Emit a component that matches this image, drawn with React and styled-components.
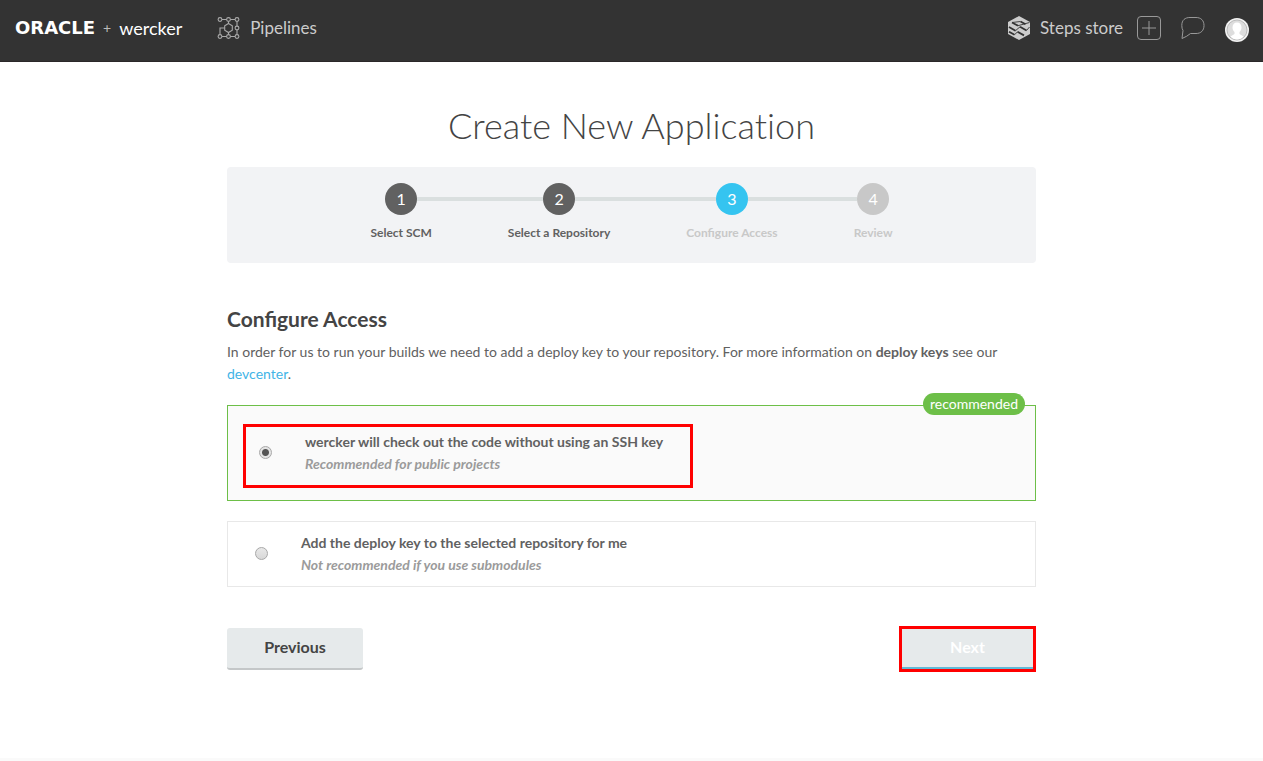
import React, { useState } from "react";
import styled, { createGlobalStyle } from "styled-components";

const GlobalStyle = createGlobalStyle`
  *, *::before, *::after { box-sizing: border-box; }
  body {
    margin: 0;
    background: #fff;
    color: #616161;
    font-family: Lato, "Liberation Sans", sans-serif;
    font-size: 14px;
    line-height: 22px;
  }
`;

const Page = styled.div`
  display: flex;
  flex-direction: column;
  min-height: 100vh;
`;

const Header = styled.header`
  display: flex;
  justify-content: space-between;
  align-items: center;
  height: 62px;
  padding: 0 14px 6px 15px;
  background: #333;
  border-bottom: 1px solid #2b2829;
`;

const NavGroup = styled.nav`
  display: flex;
  align-items: center;
  gap: ${(p) => p.$gap}px;
`;

const Brand = styled.a`
  display: flex;
  align-items: center;
  gap: 8px;
  color: #fff;
  font-size: 18px;
  text-decoration: none;
`;

const OracleName = styled.span`
  font: bold 18px/22px "DejaVu Sans", sans-serif;
`;

const Plus = styled.span`
  color: #bbb;
  font-size: 14px;
`;

const NavLink = styled.a`
  display: flex;
  align-items: center;
  gap: 10px;
  color: #ccc;
  font-size: 17px;
  text-decoration: none;
`;

const IconButton = styled.button`
  display: flex;
  padding: 0;
  border: 0;
  background: none;
  cursor: pointer;
`;

const Main = styled.main`
  flex: 1;
  width: 100%;
  max-width: 809px;
  margin: 0 auto;
  padding: 40px 0;
`;

const Title = styled.h1`
  margin: 0 0 19px;
  color: #444;
  font-size: 36px;
  font-weight: 300;
  font-variant-ligatures: none;
  line-height: 46px;
  text-align: center;
`;

const Steps = styled.ol`
  display: flex;
  justify-content: center;
  height: 96px;
  margin: 0 0 42px;
  padding: 16px 0 0;
  border-radius: 4px;
  background: #f2f3f5;
  list-style: none;
`;

const StepItem = styled.li`
  display: flex;
  flex-direction: column;
  gap: 7px;
`;

const StepTrack = styled.div`
  display: flex;
  align-items: center;
  &::before,
  &::after {
    content: "";
    flex: 1;
    height: 4px;
    background: #dadfdf;
  }
  ${StepItem}:first-child &::before,
  ${StepItem}:last-child &::after {
    background: none;
  }
`;

const circleColors = { done: "#616161", current: "#35c4f0", todo: "#c8c8c8" };

const StepNumber = styled.span`
  width: 32px;
  height: 32px;
  border-radius: 50%;
  background: ${(p) => circleColors[p.$state]};
  color: #fff;
  font-size: 16px;
  line-height: 32px;
  text-align: center;
`;

const StepLabel = styled.span`
  padding: 0 38px;
  color: ${(p) => (p.$state === "done" ? "#616161" : "#c8c8c8")};
  font-size: 12px;
  font-weight: 700;
  white-space: nowrap;
`;

const SectionTitle = styled.h2`
  margin: 0 0 8px;
  color: #444;
  font-size: 21px;
  font-weight: 700;
  line-height: 28px;
`;

const Intro = styled.p`
  margin: 0 0 20px;
  font-variant-ligatures: none;
`;

const TextLink = styled.a`
  color: #42b4e6;
  text-decoration: none;
`;

const Card = styled.div`
  position: relative;
  margin-bottom: 20px;
  padding: ${(p) => (p.$recommended ? "18px 15px 12px" : "10px 27px")};
  border: 1px solid ${(p) => (p.$recommended ? "#6dbf48" : "#e8e8e8")};
  background: ${(p) => (p.$recommended ? "#fafafa" : "#fff")};
`;

const Badge = styled.span`
  position: absolute;
  top: -13px;
  right: 10px;
  padding: 0 7px;
  border-radius: 11px;
  background: #6dbf48;
  color: #fff;
`;

const RedFrame = styled.div`
  width: fit-content;
  border: 3px solid #f00;
`;

const Option = styled.label`
  display: flex;
  align-items: center;
  gap: 33px;
  padding: ${(p) => (p.$framed ? "4px 27px 10px 13px" : "0")};
  cursor: pointer;
`;

const Radio = styled.input`
  appearance: none;
  width: 13px;
  height: 13px;
  margin: 0 0 2px;
  border: 1px solid #a8a8a8;
  border-radius: 50%;
  background: linear-gradient(#e8e8e8, #d8d8d8);
  &:checked {
    background: radial-gradient(circle, #555 0 3px, #e4e4e4 4px);
  }
`;

const OptionText = styled.span`
  display: flex;
  flex-direction: column;
  font-weight: 700;
`;

const Hint = styled.em`
  color: #9b9b9b;
`;

const Actions = styled.div`
  display: flex;
  justify-content: space-between;
  align-items: center;
  margin-top: 39px;
`;

const Button = styled.button`
  width: ${(p) => (p.$next ? 131 : 136)}px;
  height: ${(p) => (p.$next ? 40 : 42)}px;
  display: block;
  padding: 0 0 2px;
  border: 0;
  border-bottom: 2px solid ${(p) => (p.$next ? "#62b9d6" : "#c4c7c8")};
  border-radius: ${(p) => (p.$next ? 0 : 3)}px;
  background: #e6eaeb;
  color: ${(p) => (p.$next ? "#fff" : "#444")};
  font: 700 16px/22px Lato, sans-serif;
  cursor: pointer;
`;

const Footer = styled.footer`
  height: 3px;
  background: #fafafa;
`;

function PipelinesIcon() {
  const dots = [[2.5, 2.5], [11, 2.5], [19.5, 2.5], [19.5, 11], [2.5, 19.5], [11, 19.5], [19.5, 19.5]];
  return (
    <svg width="23" height="22" viewBox="0 0 22 22" fill="none" stroke="#aaa" strokeWidth="1.1">
      {dots.map(([x, y]) => (
        <circle key={x + "-" + y} cx={x} cy={y} r="1.9" />
      ))}
      <path d="M4.5 2.5H9M13 2.5h4.500M19.500 4.500V9M19.500 13v4.500M4.500 19.500H9M13 19.500h4.500M2.500 17.500V11H7M11 4.500v2M11 15.500v2" />
      <path d="M11 6.500 14.800 8.700v4.600L11 15.500l-3.800-2.200V8.700z" />
    </svg>
  );
}

function StepsIcon() {
  return (
    <svg width="22" height="24" viewBox="0 0 22 24">
      <path fill="#ccc" d="M11 0 22 6v12l-11 6L0 18V6z" />
      <g stroke="#333" fill="none">
        <path strokeWidth="1.800" d="M4 6.500l6 3.200M1 11l6.500 3.700M1 15.800l5.500 3M12.500 5.500l5 2.700M12 10.800l6.500 3.700M9.500 15.800l6.500 3.600" />
        <path strokeWidth="0.900" d="M10 9.700 21.500 6.500M7.500 14.700 12 10.800M18.500 14.500l3-3.500M6.500 18.800l3-3M4 6.500l8.500-1" />
      </g>
    </svg>
  );
}

function PlusIcon() {
  return (
    <svg width="24" height="24" viewBox="0 0 24 24" fill="none" stroke="#999">
      <rect x="0.500" y="0.500" width="23" height="23" rx="3.500" />
      <path d="M12 5v14M5 12h14" />
    </svg>
  );
}

function ChatIcon() {
  return (
    <svg width="24" height="24" viewBox="0 0 24 24" fill="none" stroke="#999" strokeLinejoin="round">
      <path d="M1 22.500 2 14.500Q.8 12.500.8 9.500C.8 4 4 1.500 9 1.500h6c5 0 8 3 8 8s-3 8-8 8H9.500Q6 20.500 1 22.500z" />
    </svg>
  );
}

function AvatarIcon() {
  return (
    <svg width="24" height="28" viewBox="0 0 24 28">
      <circle cx="12" cy="16" r="12" fill="#f2f2f2" />
      <circle cx="12" cy="16" r="10" fill="#ddd" stroke="#bbb" />
      <path fill="#fff" d="M12 8.500c3 0 4.500 2 4.500 5 0 2-1 3.500-2 4.500v2l4 2.500Q16 25.500 12 25.500T5.500 22.500l4-2.500v-2c-1-1-2-2.500-2-4.500 0-3 1.500-5 4.500-5z" />
    </svg>
  );
}

const steps = [
  { label: "Select SCM", state: "done" },
  { label: "Select a Repository", state: "done" },
  { label: "Configure Access", state: "current" },
  { label: "Review", state: "todo" },
];

function AccessOption({ value, title, hint, framed, access, onSelect }) {
  return (
    <Option $framed={framed}>
      <Radio
        type="radio"
        name="access"
        value={value}
        checked={access === value}
        onChange={() => onSelect(value)}
      />
      <OptionText>
        {title}
        <Hint>{hint}</Hint>
      </OptionText>
    </Option>
  );
}

export default function App() {
  const [access, setAccess] = useState("public");
  return (
    <Page>
      <GlobalStyle />
      <Header>
        <NavGroup $gap={35}>
          <Brand href="#home">
            <OracleName>ORACLE</OracleName>
            <Plus>+</Plus>
            wercker
          </Brand>
          <NavLink href="#pipelines">
            <PipelinesIcon />
            Pipelines
          </NavLink>
        </NavGroup>
        <NavGroup $gap={20}>
          <NavGroup as="div" $gap={14}>
            <NavLink href="#steps">
              <StepsIcon />
              Steps store
            </NavLink>
            <IconButton aria-label="Add">
              <PlusIcon />
            </IconButton>
          </NavGroup>
          <IconButton aria-label="Messages">
            <ChatIcon />
          </IconButton>
          <IconButton aria-label="Account">
            <AvatarIcon />
          </IconButton>
        </NavGroup>
      </Header>
      <Main>
        <Title>Create New Application</Title>
        <Steps>
          {steps.map((step, i) => (
            <StepItem key={step.label}>
              <StepTrack>
                <StepNumber $state={step.state}>{i + 1}</StepNumber>
              </StepTrack>
              <StepLabel $state={step.state}>{step.label}</StepLabel>
            </StepItem>
          ))}
        </Steps>
        <SectionTitle>Configure Access</SectionTitle>
        <Intro>
          In order for us to run your builds we need to add a deploy key to your repository. For
          more information on <b>deploy keys</b> see our{" "}
          <TextLink href="#devcenter">devcenter</TextLink>.
        </Intro>
        <Card $recommended>
          <Badge>recommended</Badge>
          <RedFrame>
            <AccessOption
              value="public"
              title="wercker will check out the code without using an SSH key"
              hint="Recommended for public projects"
              framed
              access={access}
              onSelect={setAccess}
            />
          </RedFrame>
        </Card>
        <Card>
          <AccessOption
            value="deploy-key"
            title="Add the deploy key to the selected repository for me"
            hint="Not recommended if you use submodules"
            access={access}
            onSelect={setAccess}
          />
        </Card>
        <Actions>
          <Button type="button">Previous</Button>
          <RedFrame>
            <Button type="button" $next>
              Next
            </Button>
          </RedFrame>
        </Actions>
      </Main>
      <Footer />
    </Page>
  );
}
